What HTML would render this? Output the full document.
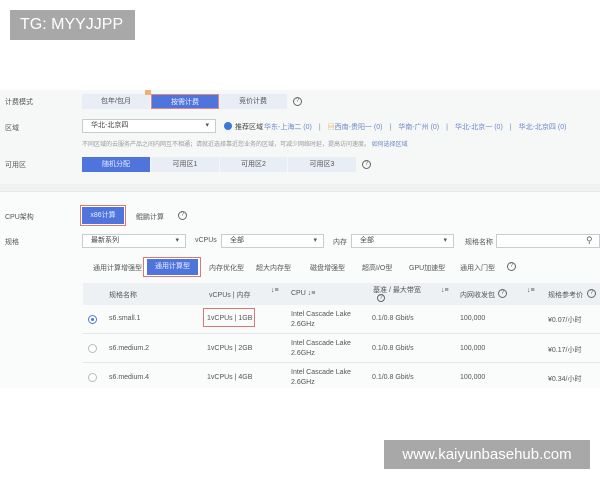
<!DOCTYPE html>
<html><head><meta charset="utf-8"><style>
*{margin:0;padding:0;box-sizing:border-box}
body{width:600px;height:480px;background:#fff;position:relative;overflow:hidden;font-family:"Liberation Sans","Noto Sans CJK SC",sans-serif;font-size:7px;color:#555}
.a{position:absolute;white-space:nowrap}
.btn{position:absolute;height:15px;line-height:15px;text-align:center;background:#e9edf5;color:#555;font-size:7px}
.blue{background:#4f75dc;color:#e8eeff}
.sel{position:absolute;height:14px;border:1px solid #c8ccd2;background:#fff;padding-left:8px;line-height:12px;font-size:7px;color:#444}
.sel:after{content:"▾";position:absolute;right:6px;top:0;font-size:7px;color:#555}
.q{position:absolute;width:9px;height:9px;border:1px solid #666;border-radius:50%;font-size:6px;line-height:7px;text-align:center;color:#666}
.lk{color:#6d87c9}
.row{position:absolute;left:83px;width:517px;border-bottom:1px solid #e3e6e8}
.rad{position:absolute;width:9px;height:9px;border:1px solid #bbb;border-radius:50%;background:#fff}
</style></head><body>
<div class="a" style="left:10px;top:10px;width:125px;height:30px;background:#a8a8a8;color:#fff;font-size:16px;line-height:30px;padding-left:10px">TG: MYYJJPP</div>

<div class="a" style="left:0;top:90px;width:600px;height:94px;background:#f6f8f8"></div>
<div class="a" style="left:0;top:184px;width:600px;height:7px;background:#f0f2f2"></div>
<div class="a" style="left:0;top:191px;width:600px;height:1px;background:#e4e7e7"></div>
<div class="a" style="left:0;top:192px;width:600px;height:196px;background:#fafbfb"></div>

<div class="a" style="left:5px;top:97px">计费模式</div>
<div class="btn" style="left:82px;top:94px;width:68px">包年/包月</div>
<div class="btn blue" style="left:151px;top:94px;width:68px;border:1px solid #d88">按需计费</div>
<div class="a" style="left:145px;top:90px;width:6px;height:5px;background:#f0b070"></div>
<div class="btn" style="left:219px;top:94px;width:68px">竞价计费</div>
<div class="q" style="left:293px;top:97px">?</div>

<div class="a" style="left:5px;top:123px">区域</div>
<div class="sel" style="left:82px;top:119px;width:134px">华北-北京四</div>
<div class="a" style="left:224px;top:122px;width:8px;height:8px;border-radius:50%;background:#3a78d8"></div>
<div class="a" style="left:235px;top:122px;color:#444">推荐区域</div>
<div class="a lk" style="left:264px;top:122px">华东-上海二 (0)　|　<span style="color:#e8a040">▤</span>西南-贵阳一 (0)　|　华南-广州 (0)　|　华北-北京一 (0)　|　华北-北京四 (0)</div>
<div class="a" style="left:82px;top:139px;color:#999;font-size:6px">不同区域的云服务产品之间内网互不相通；请就近选择靠近您业务的区域，可减少网络时延，提高访问速度。 <span class="lk">如何选择区域</span></div>

<div class="a" style="left:5px;top:160px">可用区</div>
<div class="btn blue" style="left:82px;top:157px;width:68px">随机分配</div>
<div class="btn" style="left:151px;top:157px;width:68px">可用区1</div>
<div class="btn" style="left:220px;top:157px;width:67px">可用区2</div>
<div class="btn" style="left:288px;top:157px;width:68px">可用区3</div>
<div class="q" style="left:362px;top:160px">?</div>

<div class="a" style="left:5px;top:212px">CPU架构</div>
<div class="a" style="left:80px;top:205px;width:46px;height:21px;border:1px solid #d77;background:#fff"></div>
<div class="btn blue" style="left:82px;top:207px;width:42px;height:17px;line-height:17px">x86计算</div>
<div class="a" style="left:136px;top:212px">鲲鹏计算</div>
<div class="q" style="left:178px;top:211px">?</div>

<div class="a" style="left:5px;top:237px">规格</div>
<div class="sel" style="left:82px;top:234px;width:104px">最新系列</div>
<div class="a" style="left:195px;top:237px">vCPUs</div>
<div class="sel" style="left:221px;top:234px;width:103px">全部</div>
<div class="a" style="left:333px;top:237px">内存</div>
<div class="sel" style="left:351px;top:234px;width:103px">全部</div>
<div class="a" style="left:465px;top:237px">规格名称</div>
<div class="a" style="left:496px;top:234px;width:104px;height:14px;border:1px solid #c8ccd2;background:#fff"></div>
<div class="a" style="left:586px;top:235px;font-size:9px;color:#666">⚲</div>

<div class="a" style="left:93px;top:263px">通用计算增强型</div>
<div class="a" style="left:143px;top:257px;width:58px;height:20px;border:1px solid #d77;background:#fff"></div>
<div class="btn blue" style="left:147px;top:259px;width:51px;height:16px;line-height:16px">通用计算型</div>
<div class="a" style="left:209px;top:263px">内存优化型</div>
<div class="a" style="left:256px;top:263px">超大内存型</div>
<div class="a" style="left:310px;top:263px">磁盘增强型</div>
<div class="a" style="left:362px;top:263px">超高I/O型</div>
<div class="a" style="left:409px;top:263px">GPU加速型</div>
<div class="a" style="left:460px;top:263px">通用入门型</div>
<div class="q" style="left:507px;top:262px">?</div>

<div class="a" style="left:83px;top:283px;width:517px;height:22px;background:#eef1f4"></div>
<div class="a" style="left:109px;top:290px">规格名称</div>
<div class="a" style="left:209px;top:290px">vCPUs | 内存</div>
<div class="a" style="left:271px;top:287px">↓≡</div>
<div class="a" style="left:291px;top:290px">CPU ↓≡</div>
<div class="a" style="left:373px;top:285px">基准 / 最大带宽</div>
<div class="q" style="left:377px;top:294px;width:8px;height:8px;line-height:6px">?</div>
<div class="a" style="left:441px;top:287px">↓≡</div>
<div class="a" style="left:460px;top:290px">内网收发包</div>
<div class="q" style="left:498px;top:289px">?</div>
<div class="a" style="left:527px;top:287px">↓≡</div>
<div class="a" style="left:548px;top:290px">规格参考价</div>
<div class="q" style="left:587px;top:289px">?</div>

<div class="row" style="top:305px;height:29px"></div>
<div class="row" style="top:334px;height:29px"></div>
<div class="row" style="top:363px;height:25px;border:none"></div>

<div class="rad" style="left:88px;top:315px;border-color:#4f75dc"></div>
<div class="a" style="left:91px;top:318px;width:3px;height:3px;border-radius:50%;background:#4f75dc"></div>
<div class="a" style="left:109px;top:315px">s6.small.1</div>
<div class="a" style="left:203px;top:308px;width:52px;height:19px;border:1px solid #d77"></div>
<div class="a" style="left:207px;top:315px">1vCPUs | 1GB</div>
<div class="a" style="left:291px;top:310px;line-height:10px">Intel Cascade Lake<br>2.6GHz</div>
<div class="a" style="left:372px;top:315px">0.1/0.8 Gbit/s</div>
<div class="a" style="left:460px;top:315px">100,000</div>
<div class="a" style="left:548px;top:315px">¥0.07/小时</div>

<div class="rad" style="left:88px;top:344px"></div>
<div class="a" style="left:109px;top:345px">s6.medium.2</div>
<div class="a" style="left:207px;top:345px">1vCPUs | 2GB</div>
<div class="a" style="left:291px;top:339px;line-height:10px">Intel Cascade Lake<br>2.6GHz</div>
<div class="a" style="left:372px;top:345px">0.1/0.8 Gbit/s</div>
<div class="a" style="left:460px;top:345px">100,000</div>
<div class="a" style="left:548px;top:345px">¥0.17/小时</div>

<div class="rad" style="left:88px;top:373px"></div>
<div class="a" style="left:109px;top:374px">s6.medium.4</div>
<div class="a" style="left:207px;top:374px">1vCPUs | 4GB</div>
<div class="a" style="left:291px;top:368px;line-height:10px">Intel Cascade Lake<br>2.6GHz</div>
<div class="a" style="left:372px;top:374px">0.1/0.8 Gbit/s</div>
<div class="a" style="left:460px;top:374px">100,000</div>
<div class="a" style="left:548px;top:374px">¥0.34/小时</div>

<div class="a" style="left:384px;top:440px;width:206px;height:29px;background:#a8a8a8;color:#fff;font-size:15px;line-height:29px;text-align:center">www.kaiyunbasehub.com</div>
</body></html>
